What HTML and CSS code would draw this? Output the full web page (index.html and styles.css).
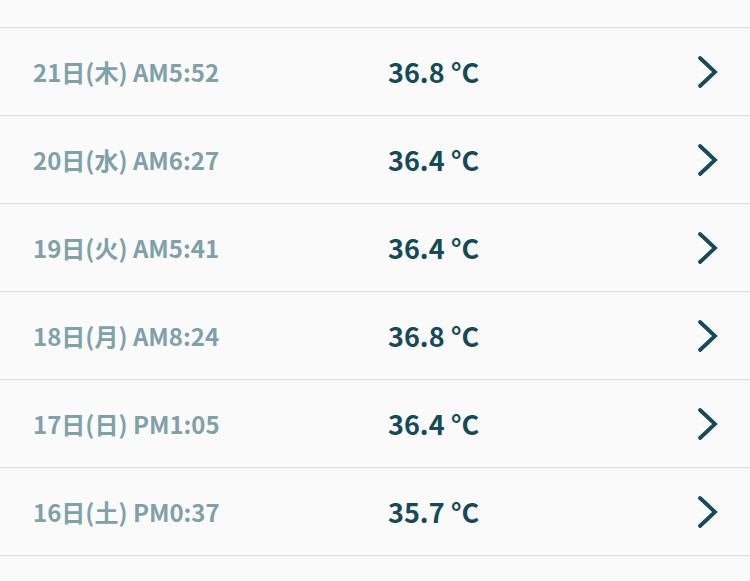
FILE: index.html
```html
<!DOCTYPE html>
<html lang="ja">
<head>
<meta charset="utf-8">
<link rel="stylesheet" href="styles.css">
</head>
<body>
<ul class="list">
  <li class="row"><span class="date"></span><span class="temp"></span><svg class="chev" viewBox="0 0 22 34"><path d="M3 3 L18 17 L3 31"/></svg></li>
  <li class="row"><span class="date">21日(木) AM5:52</span><span class="temp">36.8 °C</span><svg class="chev" viewBox="0 0 22 34"><path d="M3 3 L18 17 L3 31"/></svg></li>
  <li class="row"><span class="date">20日(水) AM6:27</span><span class="temp">36.4 °C</span><svg class="chev" viewBox="0 0 22 34"><path d="M3 3 L18 17 L3 31"/></svg></li>
  <li class="row"><span class="date">19日(火) AM5:41</span><span class="temp">36.4 °C</span><svg class="chev" viewBox="0 0 22 34"><path d="M3 3 L18 17 L3 31"/></svg></li>
  <li class="row"><span class="date">18日(月) AM8:24</span><span class="temp">36.8 °C</span><svg class="chev" viewBox="0 0 22 34"><path d="M3 3 L18 17 L3 31"/></svg></li>
  <li class="row"><span class="date">17日(日) PM1:05</span><span class="temp">36.4 °C</span><svg class="chev" viewBox="0 0 22 34"><path d="M3 3 L18 17 L3 31"/></svg></li>
  <li class="row"><span class="date">16日(土) PM0:37</span><span class="temp">35.7 °C</span><svg class="chev" viewBox="0 0 22 34"><path d="M3 3 L18 17 L3 31"/></svg></li>
</ul>
</body>
</html>
```
FILE: styles.css
```css
html, body {
  margin: 0;
  padding: 0;
  background: #fafafa;
  overflow: hidden;
}
body {
  font-family: "Noto Sans CJK JP", "Noto Sans", sans-serif;
}
.list {
  list-style: none;
  margin: -60px 0 0 0;
  padding: 0;
}
.row {
  display: grid;
  grid-template-columns: 355px 1fr 22px;
  align-items: center;
  height: 87px;
  border-bottom: 1px solid #d3dcdf;
  padding: 0 31px 0 33px;
}
.date {
  font-size: 24px;
  font-weight: 700;
  color: #7fa1a9;
}
.temp {
  font-size: 27px;
  font-weight: 700;
  color: #134b57;
}
.chev {
  width: 22px;
  height: 34px;
  fill: none;
  stroke: #134b57;
  stroke-width: 3.8;
  stroke-linecap: round;
  stroke-linejoin: miter;
}
```
